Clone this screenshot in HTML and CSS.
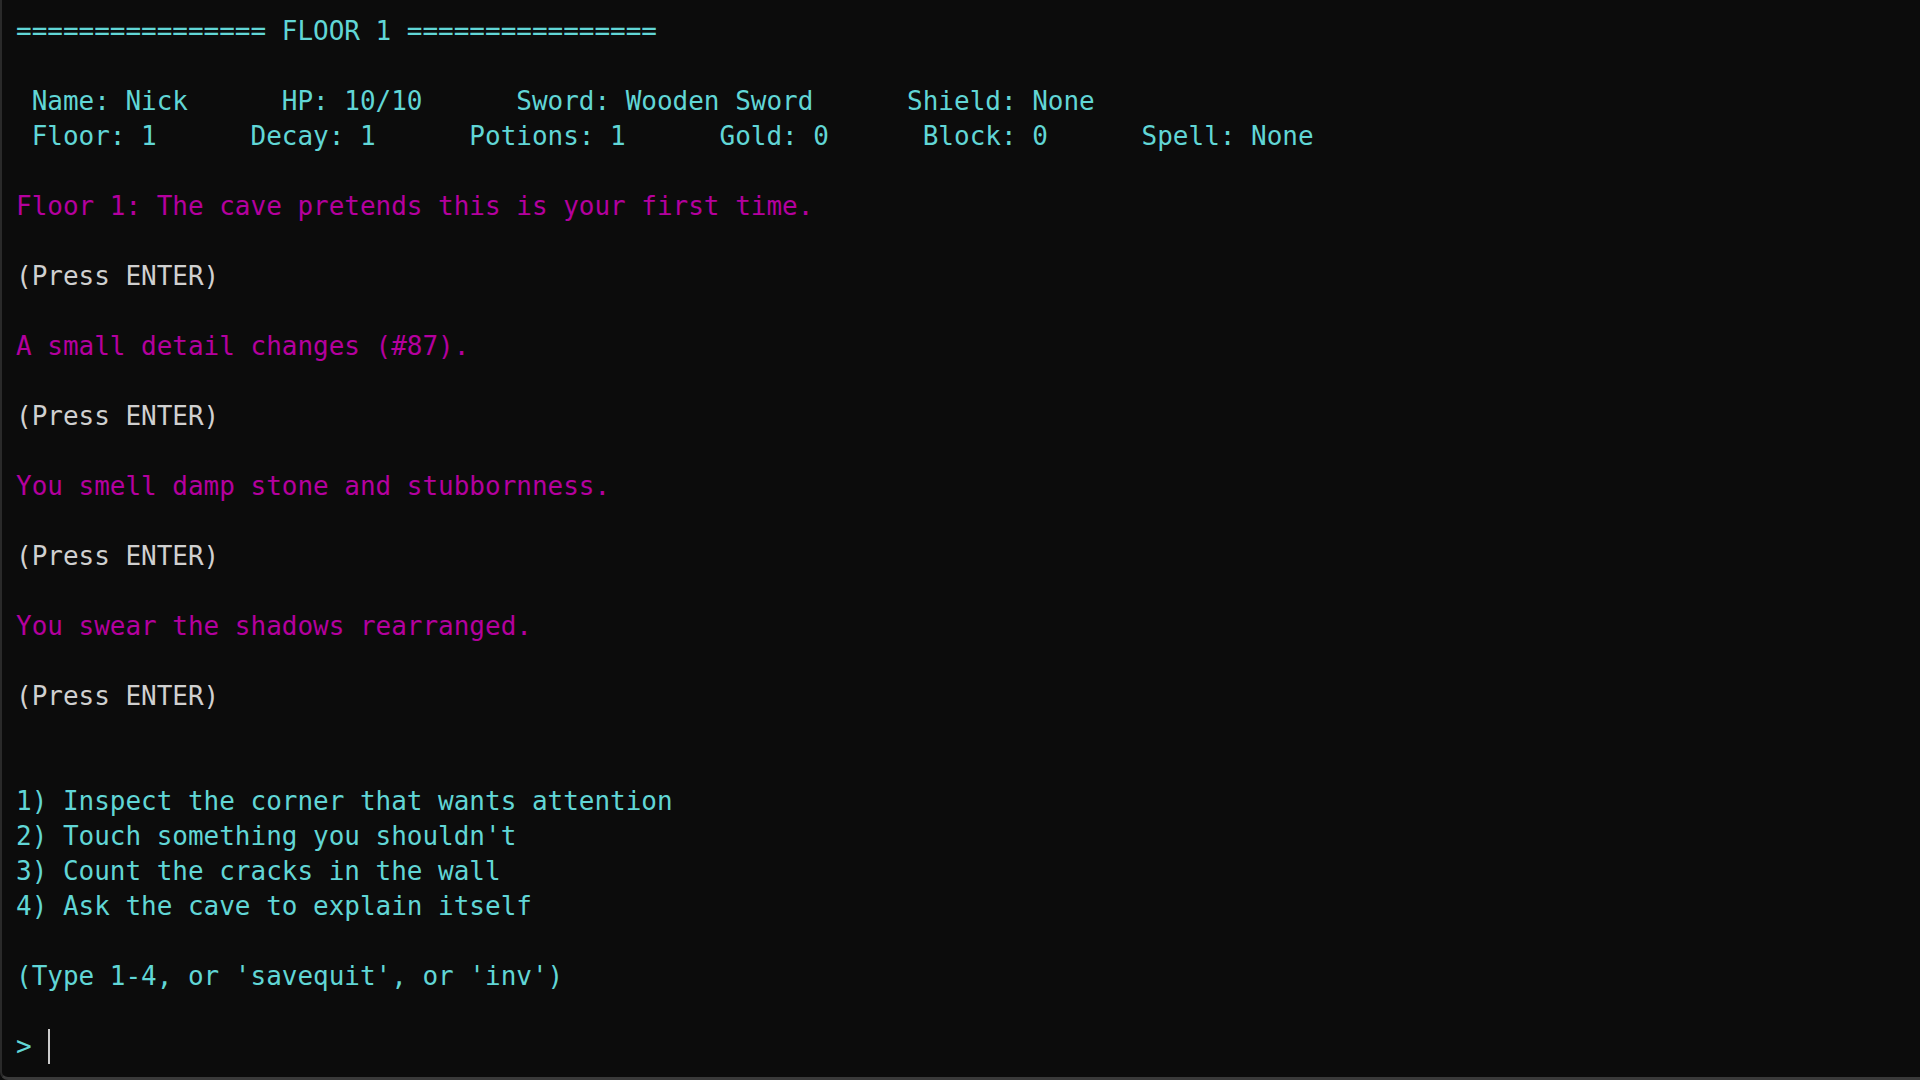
FILE: index.html
```html
<!DOCTYPE html>
<html lang="en">
<head>
<meta charset="utf-8">
<title>Terminal - Floor 1</title>
<link rel="stylesheet" href="styles.css">
</head>
<body>
<div class="window">
  <div class="term">
    <div class="line cyan">================ FLOOR 1 ================</div>
    <div class="line"></div>
    <div class="line cyan"> Name: Nick      HP: 10/10      Sword: Wooden Sword      Shield: None</div>
    <div class="line cyan"> Floor: 1      Decay: 1      Potions: 1      Gold: 0      Block: 0      Spell: None</div>
    <div class="line"></div>
    <div class="line magenta">Floor 1: The cave pretends this is your first time.</div>
    <div class="line"></div>
    <div class="line white">(Press ENTER)</div>
    <div class="line"></div>
    <div class="line magenta">A small detail changes (#87).</div>
    <div class="line"></div>
    <div class="line white">(Press ENTER)</div>
    <div class="line"></div>
    <div class="line magenta">You smell damp stone and stubbornness.</div>
    <div class="line"></div>
    <div class="line white">(Press ENTER)</div>
    <div class="line"></div>
    <div class="line magenta">You swear the shadows rearranged.</div>
    <div class="line"></div>
    <div class="line white">(Press ENTER)</div>
    <div class="line"></div>
    <div class="line"></div>
    <div class="line cyan">1) Inspect the corner that wants attention</div>
    <div class="line cyan">2) Touch something you shouldn't</div>
    <div class="line cyan">3) Count the cracks in the wall</div>
    <div class="line cyan">4) Ask the cave to explain itself</div>
    <div class="line"></div>
    <div class="line cyan">(Type 1-4, or 'savequit', or 'inv')</div>
    <div class="line"></div>
    <div class="line cyan">&gt; <span class="cursor"></span></div>
  </div>
</div>
</body>
</html>
```
FILE: styles.css
```css
html, body {
  margin: 0;
  padding: 0;
  background: #0c0c0c;
}

.window {
  position: relative;
  box-sizing: border-box;
  width: 1920px;
  height: 1080px;
  background: #0c0c0c;
  border-left: 2px solid #2a2a2a;
  border-bottom: 3px solid #3a3a3a;
  border-bottom-left-radius: 8px;
  overflow: hidden;
}

.window::after {
  content: "";
  position: absolute;
  left: 1371px;
  right: 0;
  bottom: -3px;
  height: 3px;
  background: #6c6c6c;
}

.term {
  padding: 14px 0 0 14px;
  font-family: "DejaVu Sans Mono", "Liberation Mono", monospace;
  font-size: 26px;
  letter-spacing: -0.02px;
}

.line {
  height: 35px;
  line-height: 35px;
  white-space: pre;
}

.cyan { color: #61d6d6; }
.magenta { color: #b4009e; }
.white { color: #d0d0d0; }

.cursor {
  display: inline-block;
  width: 2px;
  height: 35px;
  margin-left: 1px;
  background: #cccccc;
  vertical-align: top;
}
```
